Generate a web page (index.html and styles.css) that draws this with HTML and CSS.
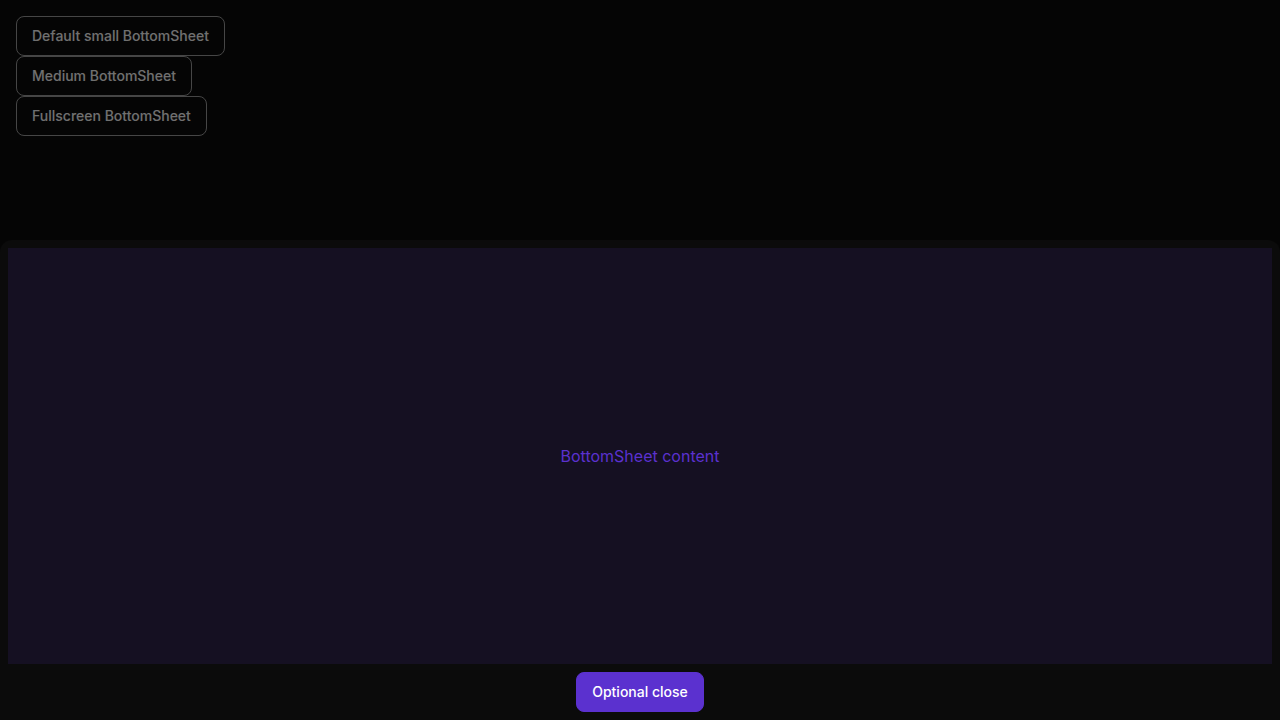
FILE: index.html
```html
<!DOCTYPE html>
<html lang="en">
<head>
<meta charset="utf-8">
<meta name="viewport" content="width=device-width, initial-scale=1">
<title>BottomSheet</title>
<link rel="stylesheet" href="styles.css">
</head>
<body>
<main class="page">
  <button class="button outline" type="button">Default small BottomSheet</button>
  <button class="button outline" type="button">Medium BottomSheet</button>
  <button class="button outline" type="button">Fullscreen BottomSheet</button>
</main>
<div class="overlay">
  <section class="sheet" role="dialog" aria-modal="true" aria-label="BottomSheet">
    <div class="content">BottomSheet content</div>
    <button class="button primary" type="button">Optional close</button>
  </section>
</div>
</body>
</html>
```

FILE: styles.css
```css
* {
  box-sizing: border-box;
}

body {
  margin: 0;
  background: #0b0b0b;
  font-family: Inter, "Liberation Sans", sans-serif;
  font-size: 16px;
  line-height: 24px;
}

.page {
  display: flex;
  flex-direction: column;
  align-items: flex-start;
  padding: 16px;
}

.button {
  height: 40px;
  padding: 0 15px;
  border: 1px solid transparent;
  border-radius: 8px;
  font: 500 14px/20px Inter, "Liberation Sans", sans-serif;
  cursor: pointer;
}

.outline {
  background: transparent;
  border-color: #8c8c8c;
  color: #e0e0e0;
}

.primary {
  border-color: #5b31cf;
  background: #5b31cf;
  color: #fff;
}

.overlay {
  position: fixed;
  inset: 0;
  display: flex;
  align-items: flex-end;
  background: rgba(0, 0, 0, 0.5);
}

.sheet {
  display: flex;
  flex: 1;
  flex-direction: column;
  align-items: center;
  gap: 8px;
  min-height: calc(100vh * 2 / 3);
  padding: 8px;
  border-radius: 12px 12px 0 0;
  background: #0b0b0b;
}

.content {
  display: flex;
  flex: 1;
  align-self: stretch;
  align-items: center;
  justify-content: center;
  background: #151022;
  color: #5b31cf;
}
```
